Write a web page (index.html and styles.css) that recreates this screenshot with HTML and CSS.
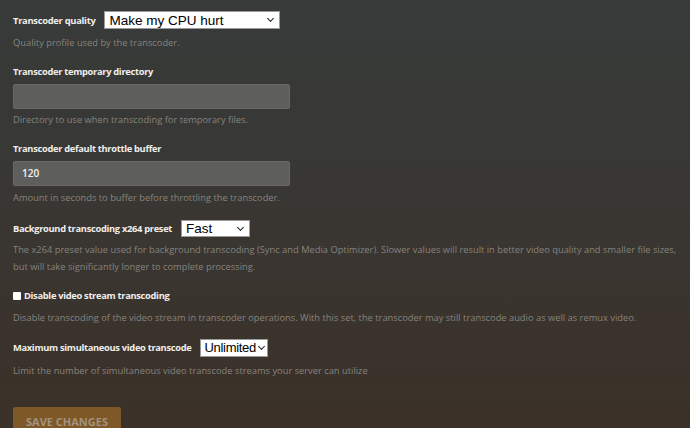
FILE: index.html
```html
<!DOCTYPE html>
<html>
<head>
<meta charset="utf-8">
<link rel="stylesheet" href="styles.css">
</head>
<body>
<div class="page">
  <div class="group">
    <div class="row row-q">
      <span class="label label-q">Transcoder quality</span>
      <div class="select sel-quality"><span>Make my CPU hurt</span><span class="chev"></span></div>
    </div>
    <div class="desc d1">Quality profile used by the transcoder.</div>
  </div>

  <div class="group">
    <div class="label">Transcoder temporary directory</div>
    <div class="input"></div>
    <div class="desc d2">Directory to use when transcoding for temporary files.</div>
  </div>

  <div class="group">
    <div class="label">Transcoder default throttle buffer</div>
    <div class="input"><span class="val">120</span></div>
    <div class="desc d3">Amount in seconds to buffer before throttling the transcoder.</div>
  </div>

  <div class="group g4">
    <div class="row">
      <span class="label">Background transcoding x264 preset</span>
      <div class="select sel-fast"><span>Fast</span><span class="chev"></span></div>
    </div>
    <div class="desc d4">The x264 preset value used for background transcoding (Sync and Media Optimizer). Slower values will result in better video quality and smaller file sizes, but will take significantly longer to complete processing.</div>
  </div>

  <div class="group">
    <div class="row check-row">
      <span class="box"></span>
      <span class="label">Disable video stream transcoding</span>
    </div>
    <div class="desc d5">Disable transcoding of the video stream in transcoder operations. With this set, the transcoder may still transcode audio as well as remux video.</div>
  </div>

  <div class="group g6">
    <div class="row">
      <span class="label">Maximum simultaneous video transcode</span>
      <div class="select sel-unl"><span>Unlimited</span><span class="chev"></span></div>
    </div>
    <div class="desc d6">Limit the number of simultaneous video transcode streams your server can utilize</div>
  </div>

  <button class="save">SAVE CHANGES</button>
</div>
</body>
</html>
```
FILE: styles.css
```css
html, body {
  margin: 0;
  height: 100%;
}
body {
  background: linear-gradient(to bottom, #373b39 0%, #383835 35%, #3a342e 70%, #3b3128 100%);
  font-family: "Open Sans", "DejaVu Sans", sans-serif;
  overflow: hidden;
}
.page {
  padding: 11px 13px 0;
  display: flex;
  flex-direction: column;
  align-items: flex-start;
}
.group {
  display: flex;
  flex-direction: column;
  align-items: flex-start;
  margin-bottom: 12px;
}
.g4 { margin-top: 2px; }
.g6 { margin-top: 1px; }
.row {
  display: flex;
  align-items: center;
  height: 17px;
}
.row-q { height: 18px; }
.label {
  color: #f0efed;
  font-weight: 700;
  font-size: 9.3px;
  line-height: 17px;
  letter-spacing: -0.3px;
  white-space: nowrap;
}
.label-q {
  font-size: 9.4px;
  letter-spacing: -0.3px;
}
.desc {
  color: #86837e;
  font-size: 9.3px;
  line-height: 17px;
  letter-spacing: 0.01px;
}
.d1 { margin-top: 5px; }
.d2 { margin-top: 2.5px; }
.d3 { margin-top: 3.5px; }
.d4 { margin-top: 4px; max-width: 682px; }
.d5 { margin-top: 5px; }
.d6 { margin-top: 6px; }
.select {
  display: flex;
  align-items: center;
  justify-content: space-between;
  background: #fff;
  border: 1px solid #9a9a9a;
  box-sizing: border-box;
  color: #000;
  font-family: "Liberation Sans", Arial, sans-serif;
  font-size: 13.5px;
  padding: 0 6px 0 4px;
  flex: none;
  white-space: nowrap;
}
.sel-quality { margin-left: 9px; width: 176px; height: 18px; }
.sel-fast { margin-left: 9px; width: 69px; height: 17px; }
.sel-unl {
  margin-left: 9px;
  width: 68px;
  height: 18px;
  padding: 0 3px 0 3px;
  font-size: 13px;
  letter-spacing: -0.3px;
}
.chev {
  width: 4px;
  height: 4px;
  border-right: 1.4px solid #222;
  border-bottom: 1.4px solid #222;
  transform: rotate(45deg);
  margin-top: -3px;
  margin-left: 2px;
  flex: none;
}
.input {
  margin-top: 3.5px;
  width: 277px;
  height: 25px;
  box-sizing: border-box;
  background: #5e5e5c;
  border: 1px solid #686866;
  border-radius: 2px;
  display: flex;
  align-items: center;
  padding-left: 8px;
}
.val {
  color: #f2f2f0;
  font-size: 10px;
  font-weight: 600;
}
.check-row { gap: 3px; }
.box {
  width: 8px;
  height: 8px;
  background: #fff;
  border-radius: 1px;
}
.save {
  margin-top: 16px;
  background: #7e5827;
  border: none;
  border-radius: 2px;
  color: #a3937f;
  font-family: "Open Sans", sans-serif;
  font-weight: 700;
  font-size: 11px;
  width: 108px;
  height: 30px;
  padding: 0;
  text-align: center;
  line-height: 30px;
}
```
